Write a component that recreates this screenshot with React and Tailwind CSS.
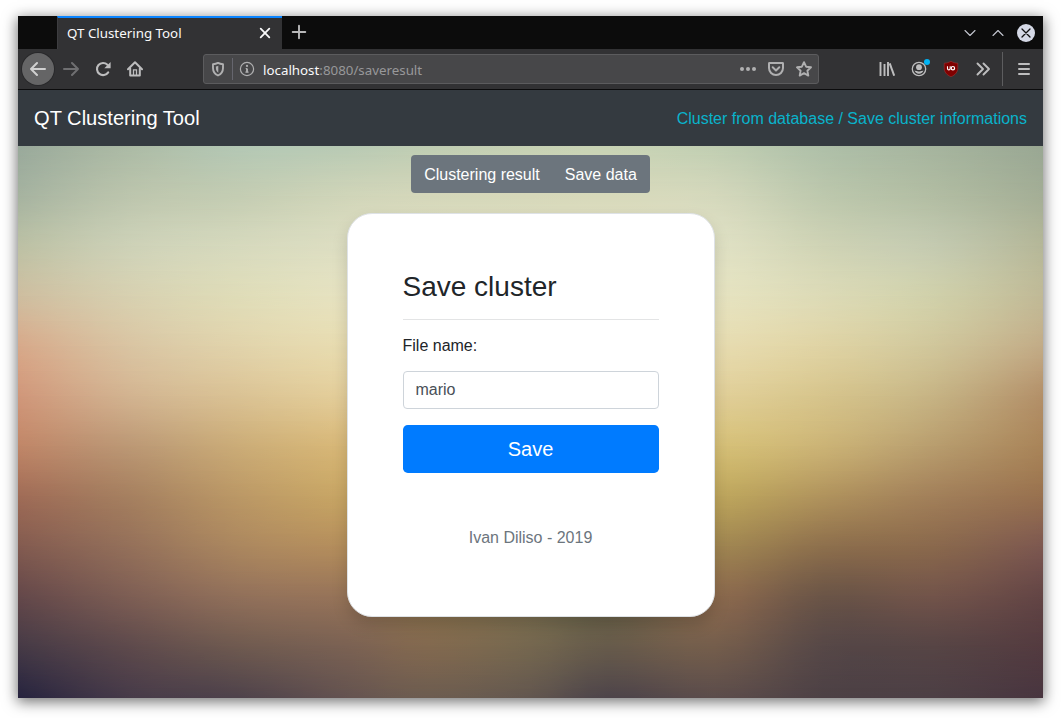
import React from "react";

const COLUMNS = [0, 110, 220, 330, 410, 512, 590, 696, 806, 916, 1025];
const ROWS = [0, 50, 100, 150, 200, 250, 300, 350, 400, 450, 500, 552];
const COLORS = [
  ["#99a99b", "#abbaa5", "#b3c7b4", "#b8cab4", "#bfcdb3", "#c6d1b4", "#c8d3b5", "#c0ceb2", "#aebfa8", "#a5b49e", "#99a793"],
  ["#a6b3a0", "#bcc5ad", "#c4cdb3", "#d0d5b9", "#d4d7ba", "#d6d8ba", "#d7d9bb", "#d4d8bc", "#bdc8ad", "#b2bda3", "#a4ae96"],
  ["#bcc0a4", "#cdd1b7", "#d6d9bd", "#dddec2", "#e1e1c4", "#e2e2c5", "#e2e2c5", "#e0e1c4", "#cfd3b5", "#c4cab0", "#b5b798"],
  ["#cebd9f", "#d7d0b0", "#dfdcb8", "#e6e2c0", "#e6e2c0", "#e6e2c0", "#e6e2c0", "#e6e3c0", "#dcdab6", "#d0d0aa", "#c0b996"],
  ["#d7a98a", "#d9c4a2", "#e1d3ab", "#e8dcb0", "#e8dcb0", "#e8dcb0", "#e8dcb0", "#e7dcb0", "#dfd3a4", "#d0c69b", "#c2ab86"],
  ["#d0977a", "#d2b390", "#dac294", "#e4ce9a", "#e6cf9c", "#e6cf9c", "#e6cf9c", "#e1cf98", "#d6c48c", "#c6b384", "#b39069"],
  ["#c08668", "#bc9875", "#cbac78", "#d8b878", "#d8b878", "#d8b878", "#d8b878", "#d6c078", "#cbb376", "#b89d6e", "#a98459"],
  ["#a06c57", "#a68060", "#bb9866", "#c8a665", "#c8a665", "#c8a665", "#c8a665", "#bfa75e", "#b0935d", "#a2805a", "#98714f"],
  ["#835b50", "#94705a", "#ab875f", "#b48e5c", "#ac8a55", "#98804f", "#90784e", "#a18752", "#8e704d", "#8a694d", "#7d5850"],
  ["#64484a", "#7d5e54", "#91705a", "#967458", "#8e754f", "#7d7050", "#6c6448", "#8c6b4e", "#6b5547", "#72544a", "#634545"],
  ["#463a46", "#5e4a4c", "#6f5a50", "#7b6253", "#82694f", "#75674f", "#675b4b", "#755e4c", "#574847", "#574545", "#543b40"],
  ["#26233f", "#463a49", "#4e424b", "#645350", "#6c5c50", "#62564f", "#4d444a", "#5b4c4b", "#4d4145", "#4d3f45", "#48353f"],
];

const toRgb = (hex) => [1, 3, 5].map((k) => parseInt(hex.slice(k, k + 2), 16));
const mix = (a, b, c, d, t) =>
  0.5 * (2 * b + (c - a) * t + (2 * a - 5 * b + 4 * c - d) * t * t + (3 * b - a - 3 * c + d) * t * t * t);

// Catmull-Rom subdivision of a list of vectors.
function smooth(list, parts) {
  const at = (k) => list[Math.max(0, Math.min(list.length - 1, k))];
  const out = [];
  for (let i = 0; i < list.length - 1; i++) {
    for (let s = 0; s < parts; s++) {
      out.push(at(i).map((_, n) => mix(at(i - 1)[n], at(i)[n], at(i + 1)[n], at(i + 2)[n], s / parts)));
    }
  }
  out.push(at(list.length - 1));
  return out;
}

const PARTS = 4;
const xs = smooth(COLUMNS.map((x) => [x]), PARTS).map((v) => v[0]);
const ys = smooth(ROWS.map((y) => [y]), PARTS).map((v) => v[0]);
const bands = smooth(COLORS.map((row) => smooth(row.map(toRgb), PARTS).flat()), PARTS);

function Backdrop() {
  return bands.map((row, i) => {
    const stops = xs
      .map((x, k) => `rgb(${row.slice(k * 3, k * 3 + 3).map((v) => v.toFixed(1)).join(" ")}) ${x.toFixed(1)}px`)
      .join(", ");
    const mask = i
      ? `linear-gradient(to bottom, transparent ${ys[i - 1].toFixed(1)}px, black ${ys[i].toFixed(1)}px)`
      : "none";
    return (
      <div
        key={i}
        className="col-start-1 row-start-1"
        style={{ backgroundImage: `linear-gradient(to right, ${stops})`, maskImage: mask }}
      />
    );
  });
}

function Icon({ children, className = "size-4", box = "0 0 16 16", width = 2 }) {
  return (
    <svg viewBox={box} className={className} fill="none" stroke="currentColor" strokeWidth={width} strokeLinecap="round" strokeLinejoin="round">
      {children}
    </svg>
  );
}

function ToolButton({ children, className = "" }) {
  return <button className={`flex h-8 w-8 shrink-0 items-center justify-center ${className}`}>{children}</button>;
}

function TabBar() {
  return (
    <div className="flex h-[33px] bg-[#0c0c0c]">
      <div className="ml-[39px] flex w-[225px] items-center justify-between border-t-2 border-l border-t-[#0a84ff] border-l-[#3d3d40] bg-[#323234] pr-[11px] pl-[9px] text-[13.33px] text-[#f9f9fa]">
        <span className="whitespace-nowrap">QT Clustering Tool</span>
        <Icon className="-mt-px size-3" box="0 0 12 12" width={1.8}>
          <path d="M1.7 1.7l8.6 8.6M10.3 1.7L1.7 10.3" />
        </Icon>
      </div>
      <button className="ml-[9px] flex h-8 w-4 items-center justify-center text-[#b8b8b9]">
        <Icon className="size-4 shrink-0" width={1.9}>
          <path d="M8 1.7v12.6M1.7 8h12.6" />
        </Icon>
      </button>
      <div className="mt-px ml-auto flex h-8 items-center gap-[10px] pr-2 text-[#c3c6cf]">
        <Icon className="size-[18px]" box="0 0 18 18" width={1.1}>
          <path d="M4 6.5l5 5 5-5" />
        </Icon>
        <Icon className="size-[18px]" box="0 0 18 18" width={1.1}>
          <path d="M4 11.5l5-5 5 5" />
        </Icon>
        <span className="flex size-[18px] items-center justify-center rounded-full bg-[#d5d9e6] text-[#101010]">
          <Icon className="size-[18px]" box="0 0 18 18" width={1.3}>
            <path d="M5 5l8 8M13 5l-8 8" />
          </Icon>
        </span>
      </div>
    </div>
  );
}

function AddressBar() {
  return (
    <div className="ml-[52px] flex h-[30px] w-[616px] items-center rounded-[3px] border border-[#5c5c5e] bg-[#474749] pr-[6px] pl-[6px] text-[#b0b0b1]">
      <Icon width={1.9}>
        <path d="M8 1.900c-1.700.900-3.300 1.200-5 1.300v3.800c0 3.500 1.600 6 5 7.500 3.400-1.500 5-4 5-7.500V3.200c-1.700-.1-3.300-.4-5-1.300z" />
        <path d="M8.300 4.700c-.8.400-1.600.6-2.400.7V7c0 2 .8 3.600 2.400 4.700z" fill="currentColor" stroke="none" />
      </Icon>
      <span className="ml-[6px] h-[22px] w-px bg-[#66666e]" />
      <Icon className="ml-[6px] size-4" width={1.2}>
        <circle cx="8" cy="8" r="6.600" />
        <path d="M8 7.500v3.700" strokeWidth="1.900" strokeLinecap="butt" />
        <path d="M6.700 7.500H8M6.400 11.200h3.200" strokeLinecap="butt" />
        <circle cx="8" cy="4.900" r="1.100" fill="currentColor" stroke="none" />
      </Icon>
      <span className="ml-2 pt-[3px] text-[13.33px] whitespace-nowrap text-[#98989a]">
        <span className="text-[#f9f9fa]">localhost</span>:8080/saveresult
      </span>
      <div className="ml-auto flex gap-3">
        <Icon>
          <g fill="currentColor" stroke="none">
            <circle cx="2" cy="8" r="2" />
            <circle cx="8" cy="8" r="2" />
            <circle cx="14" cy="8" r="2" />
          </g>
        </Icon>
        <Icon width={2}>
          <path d="M1.400 2h13.200c.3 0 .4.1.4.4V7a7 7 0 0 1-14 0V2.400c0-.3.1-.4.4-.4z" />
          <path d="M4.700 6.300L8 9.500l3.300-3.200" />
        </Icon>
        <Icon width={1.9}>
          <path d="M8 1.200l2.100 4.500 4.900.6-3.600 3.400.9 4.900L8 12.200l-4.300 2.400.9-4.900L1 6.300l4.900-.6z" />
        </Icon>
      </div>
    </div>
  );
}

function Toolbar() {
  return (
    <div className="flex h-[41px] items-center border-b border-[#0c0c0d] bg-[#323234] pl-1 text-[#bdbdbe]">
      <ToolButton className="mr-px rounded-full bg-[#656566] text-[#d0d0d0] ring-1 ring-[#29292b]">
        <Icon>
          <path d="M15 8H1M7 2L1 8l6 6" />
        </Icon>
      </ToolButton>
      <ToolButton className="text-[#6f6f71]">
        <Icon>
          <path d="M1 8h14M9 2l6 6-6 6" />
        </Icon>
      </ToolButton>
      <ToolButton>
        <Icon width={2.1}>
          <path d="M13.200 11.400A6.100 6.100 0 1 1 12.400 3.700" />
          <path d="M15.600 1v6.300H9.300z" fill="currentColor" stroke="none" />
        </Icon>
      </ToolButton>
      <ToolButton>
        <Icon width={2}>
          <path d="M1 8.200L8 1.300l7 6.900" />
          <path d="M3.200 7.500V14.600h9.600V7.500" />
          <path d="M6.500 14.500V8.800h3v5.700" strokeWidth="1.300" strokeLinecap="butt" strokeLinejoin="miter" />
        </Icon>
      </ToolButton>
      <AddressBar />
      <ToolButton className="ml-[52px]">
        <Icon>
          <path d="M1.500 1v14M5.500 3v12M9 1v14" strokeLinecap="butt" strokeWidth="1.900" />
          <path d="M10.700 2.400l4.500 12.300" strokeLinecap="butt" />
        </Icon>
      </ToolButton>
      <ToolButton>
        <span className="relative">
          <Icon width={1.3}>
            <circle cx="8" cy="8" r="6.700" />
            <circle cx="8" cy="6.200" r="2.900" fill="currentColor" stroke="none" />
            <path d="M3.500 9.600c1 .5 1.500.4 2.500.3 1.200.8 2.800.8 4 0 1 .1 1.500.2 2.500-.3-.6 2-2.300 3.200-4.500 3.200S4.100 11.600 3.500 9.600z" fill="currentColor" stroke="none" />
          </Icon>
          <span className="absolute -top-[2px] -right-[3px] size-[6px] rounded-full bg-[#00b3f4]" />
        </span>
      </ToolButton>
      <ToolButton>
        <svg viewBox="0 0 16 16" className="size-4">
          <path d="M8 .2c2 1.300 4.400 1.900 6.800 2V7c0 4-2.300 6.800-6.800 8.800C3.500 13.800 1.200 11 1.200 7V2.200C3.600 2.100 6 1.500 8 .2z" fill="#800000" stroke="#a33c3c" strokeWidth=".5" />
          <path d="M4.500 5.200v2.400a1.350 1.350 0 0 0 2.700 0V5.200" fill="none" stroke="#fff" strokeWidth="1.100" />
          <circle cx="9.900" cy="7.200" r="1.700" fill="none" stroke="#fff" strokeWidth="1.200" />
        </svg>
      </ToolButton>
      <ToolButton>
        <Icon width={1.9}>
          <path d="M2.500 2.500L8 8l-5.500 5.500M8.500 2.500L14 8l-5.500 5.500" />
        </Icon>
      </ToolButton>
      <span className="ml-[3px] h-[34px] w-px bg-[#5d5d5f]" />
      <ToolButton className="ml-[5px]">
        <Icon>
          <path d="M3 3h10M3 8h10M3 13h10" />
        </Icon>
      </ToolButton>
    </div>
  );
}

function SaveCard() {
  return (
    <form
      onSubmit={(e) => e.preventDefault()}
      className="mt-5 flex h-[404px] w-[368px] flex-col rounded-[25px] border border-[#dee2e6] bg-white px-[55px] pt-14 text-[#212529] shadow-[0_8px_16px_rgba(0,0,0,0.15)]"
    >
      <h3 className="h-[34px] text-[28px] leading-[34px]">Save cluster</h3>
      <hr className="mt-[15px] border-[#e3e4e5]" />
      <label htmlFor="file" className="mt-[14px] leading-6">File name:</label>
      <input
        id="file"
        defaultValue="mario"
        className="mt-[13px] h-[38px] rounded border border-[#ced4da] bg-white px-3 text-[#495057] outline-none"
      />
      <button className="mt-4 h-12 rounded-[4.8px] bg-[#007bff] text-xl text-white">Save</button>
      <p className="mt-[53px] text-center leading-6 text-[#6c757d]">Ivan Diliso - 2019</p>
    </form>
  );
}

export default function App() {
  return (
    <div className="h-[718px] w-[1061px] overflow-hidden bg-white px-[18px] pt-4 font-['Noto_Sans',sans-serif]">
      <div className="flex h-[682px] w-[1025px] flex-col shadow-[0_3px_13px_1px_rgba(0,0,0,0.55)]">
        <TabBar />
        <Toolbar />
        <div className="flex min-h-0 flex-1 flex-col font-['Liberation_Sans',sans-serif] text-base">
          <nav className="flex h-14 items-center justify-between bg-[#343a40] px-4">
            <span className="text-[20.1px] text-white">QT Clustering Tool</span>
            <span className="pt-[2px] text-[#09b3cb]">Cluster from database / Save cluster informations</span>
          </nav>
          <main className="grid h-[552px] grid-cols-1 grid-rows-1">
            <Backdrop />
            <div className="z-10 col-start-1 row-start-1 flex flex-col items-center pt-[9px]">
              <div className="flex h-[38px] items-center rounded bg-[#6c757d] px-[13px] pt-[2px] text-white">
                <span className="mr-[25px]">Clustering result</span>
                <span>Save data</span>
              </div>
              <SaveCard />
            </div>
          </main>
        </div>
      </div>
    </div>
  );
}
